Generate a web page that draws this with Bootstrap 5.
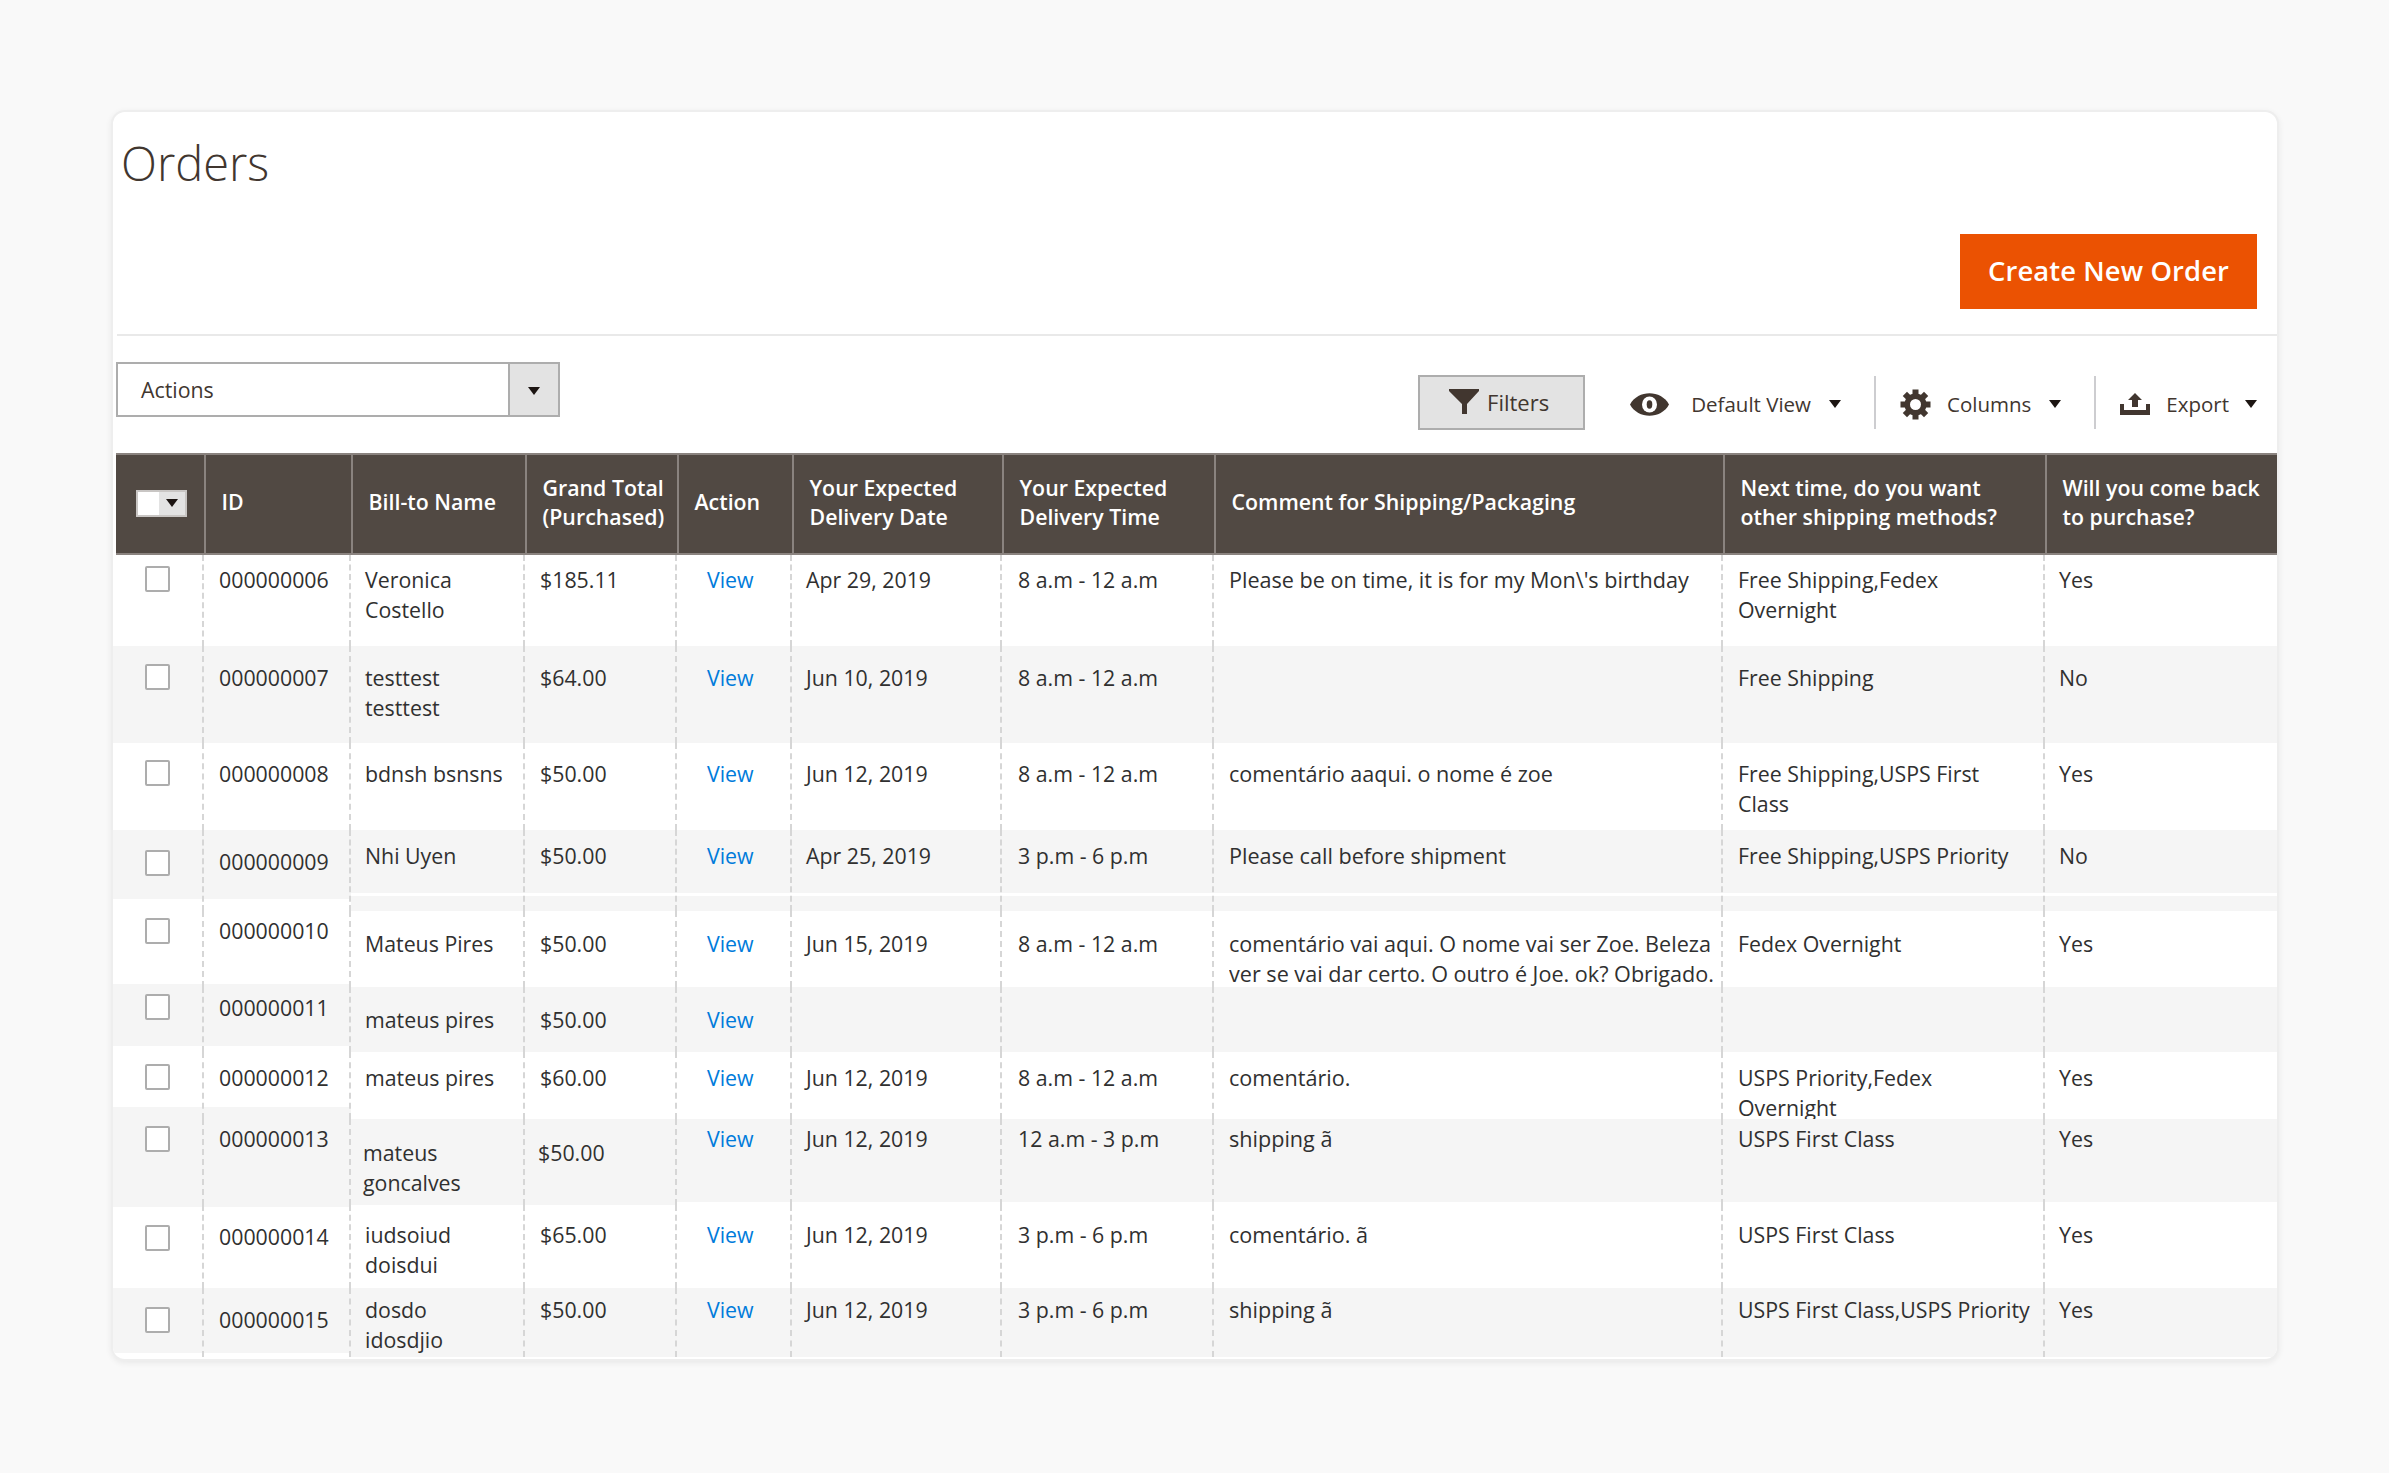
<!DOCTYPE html>
<html lang="en"><head><meta charset="utf-8"><title>Orders</title>
<link href="https://cdn.jsdelivr.net/npm/bootstrap@5.3.0/dist/css/bootstrap.min.css" rel="stylesheet">
<style>
html,body{height:100%}
body{background:#f9f9f9;padding:110px 110px 0 111px;font-family:"Open Sans",sans-serif;font-size:21.33px;color:#303030}
.ord-card{height:1251px;border:2px solid #eeeeee;border-radius:14px;box-shadow:0 2px 6px rgba(0,0,0,.07);overflow:hidden;background:#fff}
.top-sec{height:224px;margin-left:4px;border-bottom:2px solid #e9e9e9;flex:none}
.ord-title{font-family:"Open Sans",sans-serif;font-weight:300;font-size:47px;line-height:55px;color:#41362f;margin:24px 0 0 4px}
.new-btn{width:297px;height:75px;background:#eb5202;border:0;border-radius:0;color:#fff;font-weight:600;font-size:27.4px;letter-spacing:.1px;padding:0 0 2px;margin:43px 20px 0 0}
.new-btn:hover{background:#eb5202;color:#fff}
.act-sec{height:117px;padding:26px 20px 0 3px;flex:none}
.act-sel{width:444px;height:55px;flex-wrap:nowrap}
.act-sel .act-txt{height:55px;border:2px solid #adadad;border-right:0;border-radius:0;padding:0 0 0 23px;line-height:51px;font-size:21.33px;color:#41362f;background:#fff}
.act-sel .act-arr{width:52px;flex:none;height:55px;border:2px solid #adadad;border-radius:0;background:#e3e3e3;padding:0}
.dropdown-toggle::after{margin:0;vertical-align:middle;border-top:8px solid #1c1512;border-left:6px solid transparent;border-right:6px solid transparent;border-bottom:0}
.tools{margin-top:13px;height:55px}
.flt-btn{width:167px;height:55px;border:2px solid #adadad;border-radius:0;background:#e3e3e3;color:#41362f;font-size:22px;padding:0 5px 0 0;margin-right:45px}
.flt-btn svg{margin-right:8px;vertical-align:-3px}
.tool-btn{border:0;background:none;border-radius:0;padding:3px 0 0;color:#41362f;font-size:20.5px;display:flex;align-items:center;height:55px}
.tool-btn::after{margin-left:18px}
.tool-btn.tb-x::after{margin-left:16px}
.tool-btn .ico-gap{margin-right:22px}
.tool-btn .ico-gap2{margin-right:16px}
.tool-sep{width:2px;height:53px;background:#cdcdd0;margin:0 24px 0 33px}
.ord-tbl{width:100%;table-layout:fixed;border-collapse:separate;border-spacing:0;margin:0;color:#303030;font-size:21.33px;line-height:30px}
.cw1{width:91px}.cw2{width:147px}.cw3{width:174px}.cw4{width:152px}.cw5{width:115px}.cw6{width:210px}.cw7{width:212px}.cw8{width:509px}.cw9{width:322px}.cw10{width:232px}
.ord-tbl.table>thead>tr>th{background:#514943;color:#fff;font-weight:600;height:102px;line-height:29.5px;padding:0 0 4px 15.5px;white-space:nowrap;vertical-align:middle;border-style:solid;border-color:#8a837f;border-width:2px 0 2px 2px;box-shadow:none}
.ord-tbl.table>thead>tr>th:first-child{border-left:3px solid #fff;border-top-color:#fff;border-bottom-color:#fff;padding:0;background-clip:padding-box;position:relative}
.ord-tbl.table>thead>tr>th:first-child::before{content:"";position:absolute;left:0;right:0;top:-2px;border-top:2px solid #8a837f}
.ord-tbl.table>thead>tr>th:first-child::after{content:"";position:absolute;left:0;right:0;bottom:-2px;border-bottom:2px solid #8a837f}
.ord-tbl.table>tbody>tr>td{padding:0 0 0 15px;border-width:0 2px 0 0;border-style:dashed;border-color:#d6d6d6;vertical-align:top;white-space:nowrap;box-shadow:none;color:#303030;background:#fff}
.ord-tbl.table>tbody>tr>td:first-child{padding-left:32px}
.ord-tbl.table>tbody>tr>td:last-child{border-right:0;padding-left:14px}
.ord-tbl.table>tbody>tr>td:nth-child(3){padding-left:14px}
.ord-tbl.table>tbody>tr>td:nth-child(5){padding-left:30px}
.ord-tbl.table>tbody>tr>td:nth-child(6){padding-left:14px}
.ord-tbl.table>tbody>tr>td:nth-child(7){padding-left:16px}
.ord-tbl.table>tbody>tr>td:nth-child(8){font-size:21.6px}
.ord-tbl.table>tbody>tr.rg>td{background:#f5f5f5}
.ord-tbl.table>tbody>tr.r9>td{background:linear-gradient(#f5f5f5 63px,#fff 63px,#fff 66px,#f5f5f5 66px)}
.ord-tbl.table>tbody>tr.r9>td:nth-child(-n+2){background:linear-gradient(#f5f5f5 69px,#fff 69px)}
.ord-tbl.table>tbody>tr.r10>td:nth-child(-n+2){background:linear-gradient(#fff 73px,#f5f5f5 73px)}
.ord-tbl.table>tbody>tr.r11>td:nth-child(-n+2){background:linear-gradient(#f5f5f5 59px,#fff 59px)}
.ord-tbl.table>tbody>tr.r12>td:nth-child(-n+2){background:linear-gradient(#fff 55px,#f5f5f5 55px)}
.ord-tbl.table>tbody>tr.r13>td:nth-child(n+5){background:linear-gradient(#f5f5f5 83px,#fff 83px)}
.ord-tbl.table>tbody>tr.r14>td:nth-child(-n+2){background:linear-gradient(#f5f5f5 2px,#fff 2px)}
.ord-tbl.table>tbody>tr.r15>td:nth-child(-n+2){background:linear-gradient(#f5f5f5 65px,#fff 65px)}
.clipbox{max-height:56px;overflow:hidden}
.clipbox-b{max-height:58px;overflow:hidden}
.h91{height:91px}.h97{height:97px}.h87{height:87px}.h81{height:81px}.h76{height:76px}.h65{height:65px}.h67{height:67px}.h86{height:86px}.h83{height:83px}.h69{height:69px}
.ord-tbl.table>tbody>tr>td.t5{padding-top:5px}.ord-tbl.table>tbody>tr>td.t6{padding-top:6px}.ord-tbl.table>tbody>tr>td.t7{padding-top:7px}.ord-tbl.table>tbody>tr>td.t10{padding-top:10px}.ord-tbl.table>tbody>tr>td.t11{padding-top:11px}.ord-tbl.table>tbody>tr>td.t12{padding-top:12px}.ord-tbl.table>tbody>tr>td.t15{padding-top:15px}.ord-tbl.table>tbody>tr>td.t16{padding-top:16px}.ord-tbl.table>tbody>tr>td.t17{padding-top:17px}.ord-tbl.table>tbody>tr>td.t18{padding-top:18px}.ord-tbl.table>tbody>tr>td.t19{padding-top:19px}.ord-tbl.table>tbody>tr>td.t20{padding-top:20px}
.ord-tbl.table>tbody>tr>td.sh2{padding-left:12px}
.ord-tbl.table>tbody>tr>td.sh3{padding-left:13px}
.ord-chk.form-check-input{display:block;width:25px;height:26px;margin:0;border:2px solid #adadad;border-radius:2px;background-color:#fff;float:none}
.ord-link{color:#007bdb;text-decoration:none}
.hd-sel{display:flex;width:51px;height:27px;margin-left:20px;margin-top:-2px;background:#fff;border:2px solid #c9c6c4}
.hd-sel-w{flex:1}
.hd-sel-a{width:26px;background:#e3e3e3;display:flex;align-items:center;justify-content:center}
.hd-car{display:block;border-top:8px solid #1c1512;border-left:6px solid transparent;border-right:6px solid transparent}
</style></head>
<body>
<div class="card ord-card">
  <div class="top-sec d-flex flex-column">
    <h1 class="ord-title">Orders</h1>
    <div class="d-flex justify-content-end"><button class="btn new-btn">Create New Order</button></div>
  </div>
  <div class="act-sec d-flex justify-content-between align-items-start">
    <div class="input-group act-sel">
      <span class="form-control act-txt">Actions</span>
      <button class="btn act-arr dropdown-toggle" type="button" aria-label="Actions"></button>
    </div>
    <div class="tools d-flex align-items-center">
      <button class="btn flt-btn" type="button"><svg width="30" height="25" viewBox="0 0 30 25"><path fill="#41362f" d="M0 0h30v2L18 15v10h-5V15L0 2z"/></svg>Filters</button>
      <button class="btn tool-btn dropdown-toggle" type="button"><svg class="ico-gap" width="39" height="23" viewBox="0 0 39 23"><path fill="#41362f" d="M0 11.500C8-3.500 31-3.500 39 11.500 31 26.500 8 26.500 0 11.500z"/><ellipse cx="19.500" cy="11.500" rx="7.500" ry="8" fill="#fff"/><ellipse cx="19.500" cy="11.500" rx="2.800" ry="4.200" fill="#41362f"/></svg>Default View</button>
      <span class="tool-sep"></span>
      <button class="btn tool-btn dropdown-toggle" type="button"><svg class="ico-gap2" width="31" height="31" viewBox="-15.5 -15.5 31 31"><g fill="#41362f"><rect x="-3" y="-15" width="6" height="30"/><rect x="-3" y="-15" width="6" height="30" transform="rotate(45)"/><rect x="-3" y="-15" width="6" height="30" transform="rotate(90)"/><rect x="-3" y="-15" width="6" height="30" transform="rotate(135)"/><circle r="11"/></g><circle r="5.500" fill="#fff"/></svg>Columns</button>
      <span class="tool-sep"></span>
      <button class="btn tool-btn tb-x dropdown-toggle" type="button"><svg class="ico-gap2" width="30" height="22" viewBox="0 0 30 22"><path fill="#41362f" d="M15 0l7 7h-4v7h-6V7H8zM0 11h4v6h22v-6h4v11H0z"/></svg>Export</button>
    </div>
  </div>
  <table class="table ord-tbl">
    <colgroup><col class="cw1"><col class="cw2"><col class="cw3"><col class="cw4"><col class="cw5"><col class="cw6"><col class="cw7"><col class="cw8"><col class="cw9"><col class="cw10"></colgroup>
    <thead><tr>
      <th><div class="hd-sel"><span class="hd-sel-w"></span><span class="hd-sel-a"><i class="hd-car"></i></span></div></th>
      <th>ID</th><th>Bill-to Name</th><th>Grand Total<br>(Purchased)</th><th>Action</th><th>Your Expected<br>Delivery Date</th><th>Your Expected<br>Delivery Time</th><th>Comment for Shipping/Packaging</th><th>Next time, do you want<br>other shipping methods?</th><th>Will you come back<br>to purchase?</th>
    </tr></thead>
    <tbody>
      <tr class="h91">
        <td class="t11"><input class="form-check-input ord-chk" type="checkbox"></td><td class="t10">000000006</td><td class="t10">Veronica<br>Costello</td><td class="t10">$185.11</td><td class="t10"><a class="ord-link" href="#">View</a></td><td class="t10">Apr 29, 2019</td><td class="t10">8 a.m - 12 a.m</td><td class="t10">Please be on time, it is for my Mon\'s birthday</td><td class="t10">Free Shipping,Fedex<br>Overnight</td><td class="t10">Yes</td>
      </tr>
      <tr class="h97 rg">
        <td class="t18"><input class="form-check-input ord-chk" type="checkbox"></td><td class="t17">000000007</td><td class="t17">testtest<br>testtest</td><td class="t17">$64.00</td><td class="t17"><a class="ord-link" href="#">View</a></td><td class="t17">Jun 10, 2019</td><td class="t17">8 a.m - 12 a.m</td><td class="t17"></td><td class="t17">Free Shipping</td><td class="t17">No</td>
      </tr>
      <tr class="h87">
        <td class="t17"><input class="form-check-input ord-chk" type="checkbox"></td><td class="t16">000000008</td><td class="t16">bdnsh bsnsns</td><td class="t16">$50.00</td><td class="t16"><a class="ord-link" href="#">View</a></td><td class="t16">Jun 12, 2019</td><td class="t16">8 a.m - 12 a.m</td><td class="t16">comentário aaqui. o nome é zoe</td><td class="t16">Free Shipping,USPS First<br>Class</td><td class="t16">Yes</td>
      </tr>
      <tr class="h81 r9">
        <td class="t20"><input class="form-check-input ord-chk" type="checkbox"></td><td class="t17">000000009</td><td class="t11">Nhi Uyen</td><td class="t11">$50.00</td><td class="t11"><a class="ord-link" href="#">View</a></td><td class="t11">Apr 25, 2019</td><td class="t11">3 p.m - 6 p.m</td><td class="t11">Please call before shipment</td><td class="t11">Free Shipping,USPS Priority</td><td class="t11">No</td>
      </tr>
      <tr class="h76 r10">
        <td class="t7"><input class="form-check-input ord-chk" type="checkbox"></td><td class="t5">000000010</td><td class="t18">Mateus Pires</td><td class="t18">$50.00</td><td class="t18"><a class="ord-link" href="#">View</a></td><td class="t18">Jun 15, 2019</td><td class="t18">8 a.m - 12 a.m</td><td class="t18"><div class="clipbox-b">comentário vai aqui. O nome vai ser Zoe. Beleza<br>ver se vai dar certo. O outro é Joe. ok? Obrigado.</div></td><td class="t18">Fedex Overnight</td><td class="t18">Yes</td>
      </tr>
      <tr class="h65 rg r11">
        <td class="t7"><input class="form-check-input ord-chk" type="checkbox"></td><td class="t6">000000011</td><td class="t18">mateus pires</td><td class="t18">$50.00</td><td class="t18"><a class="ord-link" href="#">View</a></td><td></td><td></td><td></td><td></td><td></td>
      </tr>
      <tr class="h67 r12">
        <td class="t12"><input class="form-check-input ord-chk" type="checkbox"></td><td class="t11">000000012</td><td class="t11">mateus pires</td><td class="t11">$60.00</td><td class="t11"><a class="ord-link" href="#">View</a></td><td class="t11">Jun 12, 2019</td><td class="t11">8 a.m - 12 a.m</td><td class="t11">comentário.</td><td class="t11"><div class="clipbox">USPS Priority,Fedex<br>Overnight</div></td><td class="t11">Yes</td>
      </tr>
      <tr class="h86 rg r13">
        <td class="t7"><input class="form-check-input ord-chk" type="checkbox"></td><td class="t5">000000013</td><td class="t19 sh2">mateus<br>goncalves</td><td class="t19 sh3">$50.00</td><td class="t5"><a class="ord-link" href="#">View</a></td><td class="t5">Jun 12, 2019</td><td class="t5">12 a.m - 3 p.m</td><td class="t5">shipping ã</td><td class="t5">USPS First Class</td><td class="t5">Yes</td>
      </tr>
      <tr class="h83 r14">
        <td class="t20"><input class="form-check-input ord-chk" type="checkbox"></td><td class="t17">000000014</td><td class="t15">iudsoiud<br>doisdui</td><td class="t15">$65.00</td><td class="t15"><a class="ord-link" href="#">View</a></td><td class="t15">Jun 12, 2019</td><td class="t15">3 p.m - 6 p.m</td><td class="t15">comentário. ã</td><td class="t15">USPS First Class</td><td class="t15">Yes</td>
      </tr>
      <tr class="h69 rg r15">
        <td class="t19"><input class="form-check-input ord-chk" type="checkbox"></td><td class="t17">000000015</td><td class="t7">dosdo<br>idosdjio</td><td class="t7">$50.00</td><td class="t7"><a class="ord-link" href="#">View</a></td><td class="t7">Jun 12, 2019</td><td class="t7">3 p.m - 6 p.m</td><td class="t7">shipping ã</td><td class="t7">USPS First Class,USPS Priority</td><td class="t7">Yes</td>
      </tr>
    </tbody>
  </table>
</div>
<script src="https://cdn.jsdelivr.net/npm/bootstrap@5.3.0/dist/js/bootstrap.bundle.min.js"></script>
</body></html>
